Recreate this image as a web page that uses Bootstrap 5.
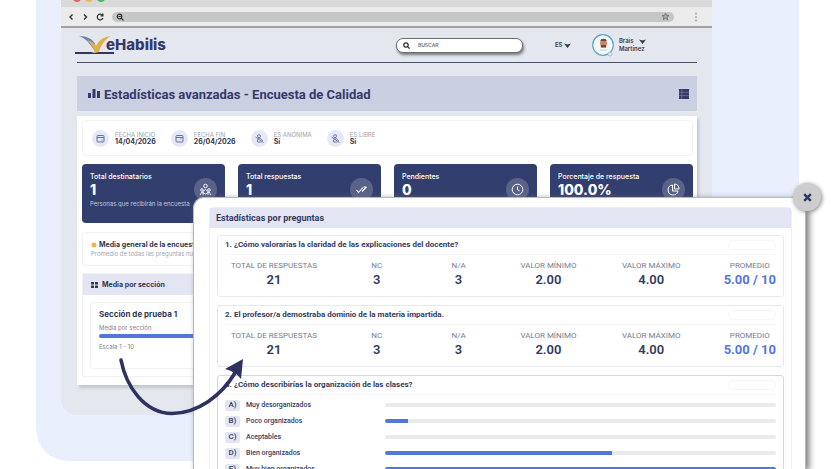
<!DOCTYPE html>
<html lang="es">
<head>
<meta charset="utf-8">
<meta name="viewport" content="width=device-width, initial-scale=1">
<title>eHabilis - Estadísticas avanzadas</title>
<link href="https://cdn.jsdelivr.net/npm/bootstrap@5.3.0/dist/css/bootstrap.min.css" rel="stylesheet">
<style>
:root{--navy:#323e6d;--ink:#343b60;--blue:#5377d8;--tint:#e3e6f2;--geo:Inter,"Liberation Sans",sans-serif}
body{font-family:Roboto,"Liberation Sans",sans-serif;color:var(--ink);background:#fff;font-size:8px;line-height:10px}
.stage{height:100vh;min-height:400px}
.backdrop{margin:0 35px 0 36px;padding:0 87px 46px 25px;background:#eaeffd;border-radius:0 0 0 32px}
.browser{background:#e4e7ee;border-radius:0 0 0 16px;padding-bottom:30px;overflow:hidden}
.tabs{height:7px;background:#d9d9da;padding-left:12px}
.light{width:8px;height:8px;border-radius:50%;margin-top:-6px}
.light.red{background:#e3655f}
.light.amber{background:#efb94c}
.light.green{background:#4fb45d}
.tools{height:21px;background:#ebebec;border-bottom:2px solid #a0a1a7;padding:0 14px 0 7px}
.plain{border:0;background:none;padding:0;color:inherit;display:flex;align-items:center}
.address{background:#c5c6c6;border-radius:5px;height:10px}
.address input{border:0;background:none;height:10px;padding:0;font-size:7px;min-width:0}
.site{padding:0 15px 0 16px;font-family:var(--geo)}
.site-head{height:35px;border-bottom:1px solid #41566c;padding-right:51px}
.brand{color:#353b68;font:800 15px/16px Inter,sans-serif;text-decoration:none}
.brand svg{margin-left:-2px}
.brand span{margin-left:-8px}
.search{width:127px;height:15px;border:1px solid #6b6d72;border-radius:7px;background:#fff;box-shadow:1px 2px 3px #777;padding:0 6px;margin-right:32px}
.search input{border:0;background:none;padding:0;width:80px;font-size:5px;font-weight:600;color:#333}
.lang{margin-right:21px;color:#333a50}
.lang select{appearance:none;border:0;background:none;padding:0;font-size:6px;font-weight:600;color:inherit;width:9px}
.user{font-size:6px;line-height:8px;font-weight:600;color:#3b4056}
.title-bar{background:#cacfe2;height:35px;margin-top:13px;padding:0 8px 0 11px}
.title-bar h1{font:700 13px/16px Roboto,sans-serif;color:#343b69;margin:3px auto 0 0}
.sheet{background:#fff;margin-top:5px;padding:4px 4px 6px 5px;box-shadow:2px 3px 3px #c3c6ce;height:269px}
.soft{border:1px solid #f1f1f4;border-radius:4px}
.facts{height:36px;padding:0 9px;gap:15px}
.fact{font-size:6px;line-height:7px;gap:6px}
.fact dt{font-weight:400;color:#a1a3ac}
.fact dd{margin:0;font-size:7px;font-weight:700;color:#333a55;line-height:8px}
.round{width:17px;height:17px;border-radius:50%;background:#e5e8f5;color:#646e9c}
.tiles{display:grid;grid-template-columns:repeat(4,1fr);gap:13px;margin-top:8px}
.tile{background:var(--navy);color:#fff;border-radius:4px;height:59px;padding:8px}
.tile h2{font-size:7px;line-height:9px;font-weight:500;margin:0}
.tile strong{display:block;font-size:14px;line-height:17px;font-weight:800}
.tile small{font-size:6px;line-height:10px;color:#c3c8dc;white-space:nowrap}
.tile .round{background:#59638a;color:#fff;width:23px;height:23px;margin-top:6px}
.overall{margin-top:9px;height:34px;padding:7px 8px;font-size:6px;line-height:9px;color:#a3a5ae}
.overall h2,.section-head h2{font-size:7px;line-height:9px;font-weight:700;margin:0;color:#303754}
.overall h2 svg{margin-right:2px}
.section-box{margin-top:7px;border:1px solid #f1f1f4}
.section-head{background:var(--tint);height:21px;padding:0 8px}
.section-card{margin:7px;padding:7px 8px;height:67px;font-size:6px;line-height:9px;color:#7c7f8d}
.section-card h3{font-size:8px;line-height:9px;font-weight:700;margin:0 0 4px;color:#303754}
.section-card .bar{margin:2px 0 4px}
.bar{height:4px;border-radius:2px;background:#e9eaec;overflow:hidden}
.bar div{height:4px;background:var(--blue)}
.dialog{position:absolute;left:193px;right:28px;top:197px;bottom:0;background:#fff;border:1px solid #b8bac1;border-bottom:0;border-radius:11px 11px 0 0;box-shadow:3px 2px 6px #777;padding:9px 13px 0 15px}
.dialog-body{overflow:hidden;height:100%}
.close-it{position:absolute;right:-16px;top:-15px;width:28px;height:28px;border-radius:50%;background:#cdcdd0;box-shadow:1px 1px 4px #888;justify-content:center;color:#303963}
.panel{border:1px solid #eeeff3;border-radius:4px 4px 0 0}
.panel-head{background:var(--tint);height:20px;padding:0 6px}
.panel-head h2{font-size:9px;line-height:12px;font-weight:700;margin:0}
.questions{padding:7px 7px 0;display:grid;gap:8px}
.question{border:1px solid #e8e9ee;border-radius:3px;padding:0 7px;height:62px}
.question.open{height:auto;border-color:#d5d7dd}
.q-head{height:19px;border-bottom:1px solid #f6f6f8}
.q-head h3{font-size:8px;line-height:10px;font-weight:700;margin:0}
.pill{width:48px;height:10px;border:1px solid #f5f5f7;border-radius:5px}
.numbers{display:grid;grid-template-columns:98fr 108fr 56fr 124fr 82fr 84fr;text-align:center;margin:0;padding-top:6px;white-space:nowrap}
.numbers dt{font-size:8px;line-height:10px;font-weight:400;color:#777c92}
.numbers dd{font-size:13px;line-height:18px;font-weight:600;margin:0}
.numbers .avg{justify-self:end}
.numbers .avg dd{color:#5477dc;font-weight:700}
.options{list-style:none;margin:0;padding:2px 0 0}
.options li{height:16px;font-size:7px;font-weight:500}
.option-name{width:29%}
.key{width:15px;height:11px;margin-right:6px;background:var(--tint);border-radius:2px;font-size:8px}
.arrow{position:absolute;left:115px;top:352px;pointer-events:none}
</style>
<script src="https://cdn.jsdelivr.net/npm/bootstrap@5.3.0/dist/js/bootstrap.bundle.min.js"></script>
</head>
<body>
<div class="stage position-relative overflow-hidden">
<div class="backdrop">
<div class="browser">
  <div class="tabs d-flex gap-1">
    <i class="light red"></i><i class="light amber"></i><i class="light green"></i>
  </div>
  <div class="tools d-flex align-items-center">
    <button class="plain me-2" aria-label="Atrás"><svg width="6" height="8" fill="none" stroke="#333" stroke-width="1.4"><path d="M4.5 1.5 2 4l2.500 2.500"/></svg></button>
    <button class="plain me-2" aria-label="Adelante"><svg width="6" height="8" fill="none" stroke="#333" stroke-width="1.4"><path d="M2 1.500 4.500 4 2 6.500"/></svg></button>
    <button class="plain me-2" aria-label="Recargar"><svg width="8" height="8" fill="none" stroke="#333" stroke-width="1.2"><path d="M6.500 2.300A2.900 2.900 0 1 0 6.900 5M6.900.6v2.300H4.600"/></svg></button>
    <div class="address d-flex align-items-center flex-grow-1 px-1">
      <svg width="8" height="8" fill="none" stroke="#333" stroke-width="1.2"><circle cx="3.500" cy="3.500" r="2.300"/><path d="m5.200 5.200 2.300 2.300M2.300 3.500h2.400"/></svg>
      <input class="flex-grow-1" aria-label="Dirección">
      <svg width="9" height="9" fill="#aaa" stroke="#777"><path d="m4.500 1 1 2.300 2.500.2-1.900 1.700.6 2.400-2.200-1.300-2.200 1.300.6-2.400L1 3.500l2.500-.2z"/></svg>
    </div>
    <button class="plain ms-3 ps-1" aria-label="Menú"><svg width="4" height="10" fill="#aaa"><circle cx="2" cy="1.500" r="1"/><circle cx="2" cy="5" r="1"/><circle cx="2" cy="8.500" r="1"/></svg></button>
  </div>

  <div class="site">
    <header class="site-head d-flex align-items-center">
      <a class="brand d-flex align-items-center me-auto" href="#">
        <svg width="39" height="20" viewBox="0 0 39 20"><path d="M4 1c8 0 14 3 16 8l1 8C17 13 13 4 4 1z" fill="#7183bd"/><path d="M12 5c4 1 7 3 9 6 3-6 7-9 15-10-7 4-10 9-12 16l-4 2c-1-6-4-10-8-14z" fill="#dfb044"/><path d="M0 17h16l4 1 4-1h15v2H0z" fill="#303661"/></svg>
        <span>eHabilis</span>
      </a>
      <div class="search d-flex align-items-center gap-2">
        <svg width="7" height="7" fill="none" stroke="#222" stroke-width="1.2"><circle cx="3" cy="3" r="2.200"/><path d="m4.600 4.600 2 2"/></svg>
        <input type="search" placeholder="BUSCAR" aria-label="Buscar">
      </div>
      <div class="lang d-flex align-items-center">
        <select aria-label="Idioma"><option>ES</option></select>
        <svg width="7" height="5" fill="#303648"><path d="M0 .5 3.500 1.500l3.500-1L3.500 5z"/></svg>
      </div>
      <button class="plain user text-start">
        <svg class="me-1" width="23" height="24"><circle cx="11" cy="12" r="10.300" fill="#f5f8fb" stroke="#5ba5cd" stroke-width="1.2"/><circle cx="18" cy="21" r="2" fill="#dbeaf4" stroke="#7db5d5" stroke-width=".7"/><path d="M9 6h5l1 4-1 5H9L8 10z" fill="#c58663"/><path d="M8.500 8c0-3 6-3 6 0zM9 12h5v2H9z" fill="#774733"/><path d="M8 16h7v2H8z" fill="#dde1ec"/></svg>
        <span>Brais <svg class="ms-1" width="7" height="5" fill="#303648"><path d="M0 .5 3.500 1.500l3.500-1L3.500 5z"/></svg><br>Martínez</span>
      </button>
    </header>

    <div class="title-bar d-flex align-items-center">
      <svg class="me-1" width="12" height="11" fill="#343b69"><path d="M0 5h3v5H0zM4.500 1h3v9h-3zM9 3h3v7H9z"/></svg>
      <h1>Estadísticas avanzadas - Encuesta de Calidad</h1>
      <button class="plain" aria-label="Ver lista"><svg width="10" height="10"><path d="M0 0h10v10H0z" fill="#343b69"/><path d="M0 3.300h10M0 6.600h10M2.800 0v10" stroke="#8a91b5" stroke-width=".5"/></svg></button>
    </div>

    <main class="sheet">
      <div class="facts soft d-flex align-items-center">
        <div class="fact d-flex align-items-center"><span class="round d-flex align-items-center justify-content-center"><svg width="9" height="9" fill="none" stroke="currentColor"><rect x="1" y="1.500" width="7" height="6.500" rx="1"/><path d="M1 3.500h7M5.500 6h1"/></svg></span><dl class="m-0"><dt>FECHA INICIO</dt><dd>14/04/2026</dd></dl></div>
        <div class="fact d-flex align-items-center"><span class="round d-flex align-items-center justify-content-center"><svg width="9" height="9" fill="none" stroke="currentColor"><rect x="1" y="1.500" width="7" height="6.500" rx="1"/><path d="M1 3.500h7M5.500 5h1"/></svg></span><dl class="m-0"><dt>FECHA FIN</dt><dd>26/04/2026</dd></dl></div>
        <div class="fact d-flex align-items-center"><span class="round d-flex align-items-center justify-content-center"><svg width="9" height="9" fill="none" stroke="currentColor" stroke-width=".9"><circle cx="4" cy="2.200" r="1.500"/><path d="M.5 3 8.500 8.500M3 5c2-1 4 0 4.500 2M2.500 5.500v2.500h4"/></svg></span><dl class="m-0"><dt>ES ANÓNIMA</dt><dd>Sí</dd></dl></div>
        <div class="fact d-flex align-items-center"><span class="round d-flex align-items-center justify-content-center"><svg width="9" height="9" fill="none" stroke="currentColor" stroke-width=".9"><circle cx="4" cy="2.200" r="1.500"/><path d="M.5 3 8.500 8.500M3 5c2-1 4 0 4.500 2M2.500 5.500v2.500h4"/></svg></span><dl class="m-0"><dt>ES LIBRE</dt><dd>Sí</dd></dl></div>
      </div>

      <div class="tiles">
        <section class="tile d-flex justify-content-between"><div><h2>Total destinatarios</h2><strong>1</strong><small>Personas que recibirán la encuesta</small></div><span class="round d-flex flex-shrink-0 align-items-center justify-content-center"><svg width="13" height="13" fill="none" stroke="currentColor" stroke-width=".9"><circle cx="6.500" cy="3" r="1.800"/><circle cx="3" cy="7" r="1.300"/><circle cx="10" cy="7" r="1.300"/><path d="M4 12V8.500l2.500-2L9 8.500V12M1 12l2-3 3.500 2L10 9l2 3"/></svg></span></section>
        <section class="tile d-flex justify-content-between"><div><h2>Total respuestas</h2><strong>1</strong></div><span class="round d-flex flex-shrink-0 align-items-center justify-content-center"><svg width="13" height="11" fill="none" stroke="currentColor" stroke-width="1.1"><path d="m1.500 6 2 2.500L8 3.500M7 7.500 11.500 3M8.500 3h3"/></svg></span></section>
        <section class="tile d-flex justify-content-between"><div><h2>Pendientes</h2><strong>0</strong></div><span class="round d-flex flex-shrink-0 align-items-center justify-content-center"><svg width="13" height="13" fill="none" stroke="currentColor"><circle cx="6.500" cy="6.500" r="5.300"/><path d="M6.500 3.500v3.300l2 1"/></svg></span></section>
        <section class="tile d-flex justify-content-between"><div><h2 class="text-nowrap">Porcentaje de respuesta</h2><strong>100.0%</strong></div><span class="round d-flex flex-shrink-0 align-items-center justify-content-center"><svg width="13" height="13" fill="none" stroke="currentColor"><path d="M5.500 2a5 5 0 1 0 5.500 6H5.500zM7.500 1v5H12A5 5 0 0 0 7.500 1z"/></svg></span></section>
      </div>

      <section class="overall soft">
        <h2><svg width="6" height="6"><circle cx="3" cy="3" r="2.500" fill="#e8b94e"/></svg>Media general de la encuesta</h2>
        Promedio de todas las preguntas numéricas
      </section>

      <section class="section-box">
        <div class="section-head d-flex align-items-center"><svg class="me-1" width="7" height="6" fill="#303754"><path d="M0 0h3v2.500H0zM4 0h3v2.500H4zM0 3.500h3V6H0zM4 3.500h3V6H4z"/></svg><h2>Media por sección</h2></div>
        <div class="section-card soft">
          <h3>Sección de prueba 1</h3>
          Media por sección
          <div class="bar"><div class="w-100"></div></div>
          Escala 1 - 10
        </div>
      </section>
    </main>
  </div>
</div>
</div>

<div class="dialog" role="dialog" aria-labelledby="dialog-title">
  <button class="close-it plain" aria-label="Cerrar"><svg width="9" height="9" stroke="currentColor" stroke-width="2.4"><path d="m1.200 1.200 6.600 6.600M7.800 1.200 1.200 7.800"/></svg></button>
  <div class="dialog-body">
  <div class="panel">
    <div class="panel-head d-flex align-items-center"><h2 id="dialog-title">Estadísticas por preguntas</h2></div>
    <div class="questions">
      <section class="question">
        <div class="q-head d-flex align-items-center justify-content-between"><h3>1. ¿Cómo valorarías la claridad de las explicaciones del docente?</h3><span class="pill"></span></div>
        <dl class="numbers">
          <div><dt>TOTAL DE RESPUESTAS</dt><dd>21</dd></div><div><dt>NC</dt><dd>3</dd></div><div><dt>N/A</dt><dd>3</dd></div><div><dt>VALOR MÍNIMO</dt><dd>2.00</dd></div><div><dt>VALOR MÁXIMO</dt><dd>4.00</dd></div><div class="avg"><dt>PROMEDIO</dt><dd>5.00 / 10</dd></div>
        </dl>
      </section>
      <section class="question">
        <div class="q-head d-flex align-items-center justify-content-between"><h3>2. El profesor/a demostraba dominio de la materia impartida.</h3><span class="pill"></span></div>
        <dl class="numbers">
          <div><dt>TOTAL DE RESPUESTAS</dt><dd>21</dd></div><div><dt>NC</dt><dd>3</dd></div><div><dt>N/A</dt><dd>3</dd></div><div><dt>VALOR MÍNIMO</dt><dd>2.00</dd></div><div><dt>VALOR MÁXIMO</dt><dd>4.00</dd></div><div class="avg"><dt>PROMEDIO</dt><dd>5.00 / 10</dd></div>
        </dl>
      </section>
      <section class="question open">
        <div class="q-head d-flex align-items-center justify-content-between"><h3>3. ¿Cómo describirías la organización de las clases?</h3><span class="pill"></span></div>
        <ul class="options">
          <li class="d-flex align-items-center"><div class="option-name d-flex align-items-center"><span class="key text-center">A)</span>Muy desorganizados</div><div class="bar flex-grow-1"><div style="width:0%"></div></div></li>
          <li class="d-flex align-items-center"><div class="option-name d-flex align-items-center"><span class="key text-center">B)</span>Poco organizados</div><div class="bar flex-grow-1"><div style="width:6%"></div></div></li>
          <li class="d-flex align-items-center"><div class="option-name d-flex align-items-center"><span class="key text-center">C)</span>Aceptables</div><div class="bar flex-grow-1"><div style="width:0%"></div></div></li>
          <li class="d-flex align-items-center"><div class="option-name d-flex align-items-center"><span class="key text-center">D)</span>Bien organizados</div><div class="bar flex-grow-1"><div style="width:58%"></div></div></li>
          <li class="d-flex align-items-center"><div class="option-name d-flex align-items-center"><span class="key text-center">E)</span>Muy bien organizados</div><div class="bar flex-grow-1"><div style="width:100%"></div></div></li>
        </ul>
      </section>
    </div>
  </div>
  </div>
</div>

<svg class="arrow" width="134" height="66" viewBox="115 352 134 66" aria-hidden="true"><path d="M121 360C126 386 144 413 172 413.500C198 413 221 396 235 373" fill="none" stroke="#2d3261" stroke-width="3.6" stroke-linecap="round"/><path d="M243 359 225 369Q235 371 241 379z" fill="#2d3261"/></svg>
</div>
</body>
</html>
